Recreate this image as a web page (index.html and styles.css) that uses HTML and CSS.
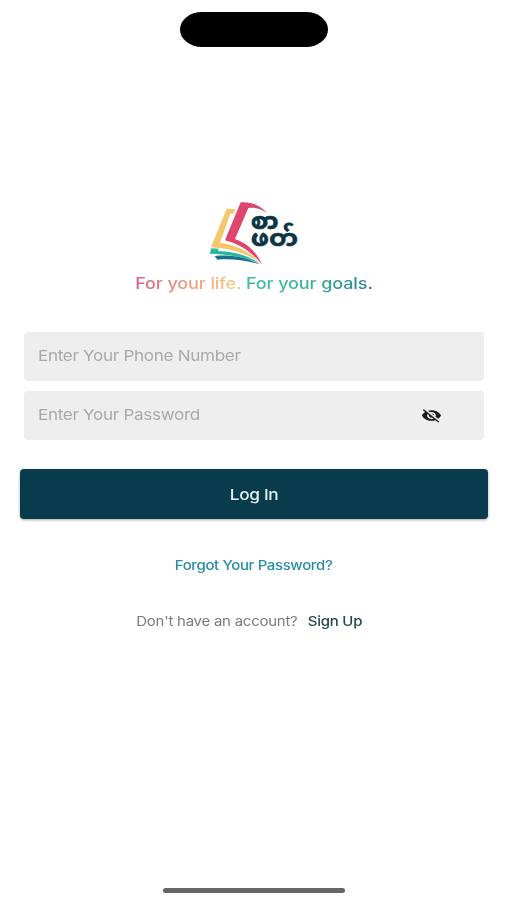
FILE: index.html
```html
<!DOCTYPE html>
<html lang="en">
<head>
    <meta charset="UTF-8">
    <meta name="viewport" content="width=device-width, initial-scale=1.0">
    <title>Log In</title>
    <link rel="stylesheet" href="styles.css">
</head>
<body>
    <div class="screen">
        <div class="island"></div>

        <div class="brand">
            <!-- Open book logo -->
            <svg class="logo" viewBox="0 0 330 240" role="img" aria-label="စာဖတ်">
                <path fill="#f5c76b" d="M80 41 L107 43 L100 56 L91 56 L60 143 C102 148 145 166 178 202 C140 175 90 160 33 157 Z"/>
                <path fill="#e0456f" d="M122 22 C155 19 183 32 202 55 C184 41 165 37 145 39 L105 132 C142 145 170 171 186 209 C155 170 118 148 75 136 Z"/>
                <path fill="#27b79b" d="M34 160 L56 161 L54 168 C103 169 145 182 180 206 C136 187 84 177 29 176 Z"/>
                <path fill="#176f8e" d="M44 183 C96 178 137 188 178 207 C133 195 90 190 52 194 Z"/>
                <text class="logo-text" x="152" y="101" textLength="84" lengthAdjust="spacingAndGlyphs">စာ</text>
                <text class="logo-text" x="152" y="152" textLength="142" lengthAdjust="spacingAndGlyphs">ဖတ်</text>
            </svg>
            <div class="tagline">For your life. For your goals.</div>
        </div>

        <form class="login-form">
            <div class="field">
                <input class="field-input" type="tel" placeholder="Enter Your Phone Number">
            </div>
            <div class="field">
                <input class="field-input" type="password" placeholder="Enter Your Password">
                <svg class="eye-icon" viewBox="0 0 24 24" preserveAspectRatio="none">
                    <path d="M12 7c2.76 0 5 2.24 5 5 0 .65-.13 1.26-.36 1.83l2.92 2.92c1.51-1.26 2.7-2.89 3.43-4.75-1.73-4.39-6-7.5-11-7.5-1.4 0-2.74.25-3.98.7l2.16 2.16C10.74 7.13 11.35 7 12 7zM2 4.27l2.28 2.28.46.46C3.08 8.3 1.78 10.02 1 12c1.73 4.39 6 7.5 11 7.5 1.55 0 3.03-.3 4.38-.84l.42.42L19.73 22 21 20.73 3.27 3 2 4.27zM7.53 9.8l1.55 1.55c-.05.21-.08.43-.08.65 0 1.66 1.34 3 3 3 .22 0 .44-.03.65-.08l1.55 1.55c-.67.33-1.41.53-2.2.53-2.76 0-5-2.24-5-5 0-.79.2-1.53.53-2.2zm4.31-.78l3.15 3.15.02-.16c0-1.66-1.34-3-3-3l-.17.01z"/>
                </svg>
            </div>
            <button class="login-button" type="button"><span class="wide">Log In</span></button>
        </form>

        <a class="forgot wide">Forgot Your Password?</a>

        <div class="signup wide">
            <span>Don't have an account?</span>
            <a class="signup-link">Sign Up</a>
        </div>

        <div class="home-indicator"></div>
    </div>
</body>
</html>
```

FILE: styles.css
```css
* {
    margin: 0;
    padding: 0;
    box-sizing: border-box;
}

body {
    font-family: 'Inter', sans-serif;
    background: #fff;
}

.screen {
    height: 900px;
    padding: 12px 19px 7px 20px;
    display: flex;
    flex-direction: column;
    align-items: center;
    overflow: hidden;
}

/* The interface type is wider than regular Inter */
.wide {
    display: inline-block;
    letter-spacing: -0.3px;
    transform: scaleX(1.15);
}

.island {
    width: 148px;
    height: 35px;
    border-radius: 22px / 17.5px;
    background: #000;
}

/* Brand */
.brand {
    display: flex;
    flex-direction: column;
    align-items: center;
    margin-top: 148px;
}

.logo {
    width: 110px;
    height: 80px;
    margin-left: 2px;
}

.logo-text {
    font-family: 'Noto Sans Myanmar', 'Noto Sans', sans-serif;
    font-size: 68px;
    font-weight: 700;
    fill: #0b3545;
    stroke: #0b3545;
    stroke-width: 1.5;
}

.tagline {
    margin-top: -1px;
    font-size: 15.5px;
    font-weight: 500;
    line-height: 20px;
    letter-spacing: -0.1px;
    white-space: nowrap;
    transform: scaleX(1.165);
    background: linear-gradient(90deg, #d95f83 0%, #ec9a83 22%, #f3cd83 43%, #42bd98 47%, #3cb396 72%, #287b98 100%);
    -webkit-background-clip: text;
    background-clip: text;
    color: transparent;
}

/* Form */
.login-form {
    width: 100%;
    margin-top: 38px;
    display: flex;
    flex-direction: column;
    gap: 10px;
}

.field {
    height: 49px;
    margin: 0 4px;
    padding: 0 42px 0 14px;
    display: flex;
    align-items: center;
    justify-content: space-between;
    border-radius: 4px;
    background: #eee;
}

.field-input {
    width: 300px;
    padding-bottom: 2px;
    border: none;
    outline: none;
    background: transparent;
    font-family: inherit;
    font-size: 15px;
    letter-spacing: -0.28px;
    transform: scaleX(1.14);
    transform-origin: left;
}

.field-input::placeholder {
    color: #a9a9a9;
}

.eye-icon {
    width: 21px;
    height: 17px;
    fill: #1d1d1d;
}

.login-button {
    height: 50px;
    margin-top: 19px;
    border: none;
    border-radius: 4px;
    background: #083b4b;
    box-shadow: 0 1px 3px rgba(0, 0, 0, 0.35);
    color: #e6f0f3;
    font-family: inherit;
    font-size: 15px;
    font-weight: 500;
}

/* Links */
.forgot {
    margin-top: 36px;
    color: #2a8cab;
    font-size: 13px;
    font-weight: 450;
    line-height: 20px;
}

.signup {
    display: flex;
    gap: 9px;
    margin-top: 36px;
    margin-right: 10px;
    color: #7b7b7b;
    font-size: 13px;
    letter-spacing: -0.2px;
    line-height: 20px;
    white-space: nowrap;
}

.signup-link {
    color: #23474f;
    font-weight: 450;
}

.home-indicator {
    width: 182px;
    height: 5px;
    margin-top: auto;
    border-radius: 3px;
    background: #666;
}
```
